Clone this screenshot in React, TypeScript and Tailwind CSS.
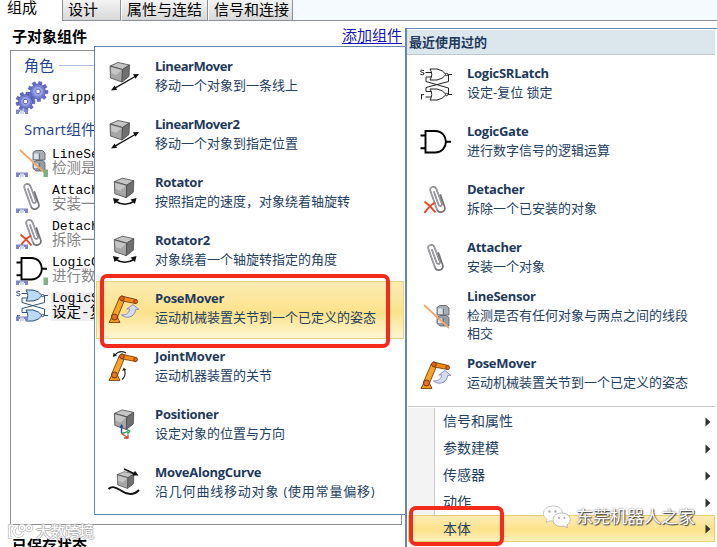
import type { ReactNode } from "react"
import { clsx } from "clsx"

type IconName =
  | "linear"
  | "rotator"
  | "pose"
  | "joint"
  | "positioner"
  | "curve"
  | "latch"
  | "gate"
  | "detach"
  | "attach"
  | "sensor"
  | "gears"

interface MenuEntry {
  title: string
  desc: string
  icon: IconName
  titleClass?: string
  descClass?: string
  active?: boolean
}

const bodyMenu: MenuEntry[] = [
  { title: "LinearMover", desc: "移动一个对象到一条线上", icon: "linear", titleClass: "tracking-[-0.47px]" },
  { title: "LinearMover2", desc: "移动一个对象到指定位置", icon: "linear", titleClass: "tracking-[-0.47px]" },
  { title: "Rotator", desc: "按照指定的速度，对象绕着轴旋转", icon: "rotator" },
  { title: "Rotator2", desc: "对象绕着一个轴旋转指定的角度", icon: "rotator" },
  { title: "PoseMover", desc: "运动机械装置关节到一个已定义的姿态", icon: "pose", active: true },
  { title: "JointMover", desc: "运动机器装置的关节", icon: "joint", titleClass: "tracking-[-0.15px]" },
  { title: "Positioner", desc: "设定对象的位置与方向", icon: "positioner" },
  {
    title: "MoveAlongCurve",
    desc: "沿几何曲线移动对象 (使用常量偏移)",
    icon: "curve",
    descClass: "tracking-[0.8px]",
  },
]

const recentMenu: MenuEntry[] = [
  { title: "LogicSRLatch", desc: "设定-复位 锁定", icon: "latch" },
  { title: "LogicGate", desc: "进行数字信号的逻辑运算", icon: "gate" },
  { title: "Detacher", desc: "拆除一个已安装的对象", icon: "detach" },
  { title: "Attacher", desc: "安装一个对象", icon: "attach" },
  { title: "LineSensor", desc: "检测是否有任何对象与两点之间的线段相交", icon: "sensor" },
  { title: "PoseMover", desc: "运动机械装置关节到一个已定义的姿态", icon: "pose" },
]

const components = [
  { name: "LineSensor", desc: "检测是否有任何对象", icon: "sensor" as IconName, out: true },
  { name: "Attacher", desc: "安装一个对象", icon: "attach" as IconName },
  { name: "Detacher", desc: "拆除一个已安装", icon: "detach" as IconName },
  { name: "LogicGate", desc: "进行数字信号", icon: "gate" as IconName, out: true },
  { name: "LogicSRLatch", desc: "设定-复位 锁定", icon: "latch" as IconName, selected: true },
]

const categories = ["信号和属性", "参数建模", "传感器", "动作", "本体"]

function Cube({ transform }: { transform?: string }) {
  return (
    <g transform={transform} stroke="#4a4a4a" strokeWidth="0.8" strokeLinejoin="round">
      <path d="M2 6 L10 2.5 L21.5 5 L14.5 9.5 Z" fill="#c4c4c4" />
      <path d="M2 6 L14.5 9.5 L14 22 L2.5 18 Z" fill="#a6a6a6" />
      <path d="M14.5 9.5 L21.5 5 L21 16.5 L14 22 Z" fill="#707070" />
      <path d="M3 7.2 L13.6 10.2 L8 15 L3.3 13 Z" fill="#d4d4d4" stroke="none" opacity="0.7" />
    </g>
  )
}

function Arm() {
  return (
    <g strokeLinejoin="round">
      <path d="M1 30.5 L4 24.5 H9 L12 30.5 Z" fill="#f39a1e" stroke="#7a3d0c" strokeWidth="0.9" />
      <path d="M3.6 24 L11.3 6 L16.6 8 L9.5 25 Z" fill="#f7a526" stroke="#7a3d0c" strokeWidth="0.9" />
      <path d="M13.5 4 L28.5 7.6 L28 11.6 L13.5 8.8 Z" fill="#f28a1c" stroke="#7a3d0c" strokeWidth="0.9" />
      <circle cx="13.9" cy="6.3" r="2.4" fill="#e0641a" stroke="#6b2a0c" strokeWidth="0.8" />
      <circle cx="6.5" cy="25" r="3" fill="#e8731c" stroke="#6b2a0c" strokeWidth="0.9" />
      <circle cx="27.7" cy="9.6" r="2" fill="#e0641a" stroke="#6b2a0c" strokeWidth="0.6" />
    </g>
  )
}

function Clip({ transform }: { transform?: string }) {
  return (
    <g transform={transform} fill="none" strokeLinecap="round">
      <path
        d="M12 8 L16.5 20.5 C17.4 23 20.6 22 19.8 19.5 L14.5 5.2 C13 1.2 7 2.8 8.4 7 L15 25.5 C16.8 30.3 24.4 28 22.7 23 L18.5 11"
        stroke="#77757b"
        strokeWidth="1.7"
      />
      <path
        d="M12 8 L16.5 20.5 C17.4 23 20.6 22 19.8 19.5 L14.5 5.2 C13 1.2 7 2.8 8.4 7 L15 25.5"
        stroke="#d6d4da"
        strokeWidth="0.5"
      />
    </g>
  )
}

function Gear({ x, y, r }: { x: number; y: number; r: number }) {
  return (
    <g transform={`translate(${x} ${y}) rotate(14)`}>
      {[0, 40, 80, 120, 160, 200, 240, 280, 320].map((a) => (
        <rect
          key={a}
          x="-1.6"
          y={-r}
          width="3.2"
          height="5"
          fill="#656dc4"
          stroke="#3a3f96"
          strokeWidth="0.4"
          transform={`rotate(${a})`}
        />
      ))}
      <circle r={r - 2.5} fill="#747dd0" stroke="#4a50a8" strokeWidth="0.5" />
      <circle r={r - 5} fill="#98a5ea" />
      <circle r="2.3" fill="#fff" stroke="#4a50a8" strokeWidth="0.8" />
    </g>
  )
}

function Latch({ tint = "none", stroke = "#222" }: { tint?: string; stroke?: string }) {
  return (
    <g fill="none" stroke={stroke} strokeWidth="1">
      <path d="M10 1 H17 Q23 2 26 6.5 Q23 11 17 12 H10 Q13.5 6.5 10 1 Z" fill={tint} />
      <path d="M10 21 H17 Q23 22 26 26.5 Q23 31 17 32 H10 Q13.5 26.5 10 21 Z" fill={tint} />
      <circle cx="26.7" cy="6.5" r="1.2" fill="#fff" />
      <circle cx="26.7" cy="26.5" r="1.2" fill="#fff" />
      <path d="M5.5 4.5 H11 M5.5 29 H11 M28 6.5 H32 M28 26.5 H32" />
      <path d="M11.5 9 H6 V13.5 L28.5 20 V26.5 M11.5 23.5 H6 V19.5 L28.5 13.5 V6.5" />
      <path d="M4 2.6 Q0.5 1.2 0.6 3.2 Q0.8 4.3 2.4 4.4 Q4.4 4.6 4 6 Q3 7.5 0.3 6.2 M1.5 26 V31.5 M1.5 28 Q2.2 26 4 26.4" />
    </g>
  )
}

const drawings: Record<IconName, ReactNode> = {
  linear: (
    <>
      <Cube />
      <path d="M6 28.6 L28 16" stroke="#111" strokeWidth="1.3" />
      <path d="M3 30.5 L6.5 25.5 L9.2 29.8 Z M31 14 L27.5 18.8 L25 14.3 Z" fill="#111" />
    </>
  ),
  rotator: (
    <>
      <Cube transform="translate(4.3 -0.3)" />
      <path d="M8 25.5 Q16.5 31 26 25.5" fill="none" stroke="#111" strokeWidth="1.5" />
      <path d="M5 22 L11.5 23.5 L6.5 28 Z M28.5 22 L22.5 23.5 L27 28 Z" fill="#111" />
    </>
  ),
  pose: (
    <>
      <Arm />
      <path
        d="M13.5 23 Q18.5 23.5 20.8 20 Q21.8 18 21.3 16.8 L18.8 17 L25 12.5 L31 17.5 L27.8 17.3 Q27.5 21.5 24 24 Q18.5 27 13.5 23 Z"
        fill="#d3dbf5"
        stroke="#7780b4"
        strokeWidth="0.8"
      />
    </>
  ),
  joint: (
    <>
      <Arm />
      <path d="M7 5 Q11.5 -0.5 18 3 M14 29.5 Q18.5 26 16.5 20" fill="none" stroke="#222" strokeWidth="1.1" />
      <path d="M4.8 7 L5.6 2.8 L9 5.4 Z M14 20.8 L15.8 17.8 L18.5 20 Z" fill="#222" />
    </>
  ),
  positioner: (
    <>
      <Cube transform="translate(4.3 -0.6)" />
      <path d="M13.5 25 V18" stroke="#24449a" strokeWidth="1.4" />
      <path d="M11.5 19.5 L13.5 16 L15.5 19.5 Z" fill="#24449a" />
      <path d="M13.5 25.5 L20 23.7 M18.5 21.2 L21.8 23.2 L19.5 26" fill="none" stroke="#2c9c58" strokeWidth="1.3" />
      <path d="M13.5 25.5 L19.5 29.5 M20 26.5 V30 H16" fill="none" stroke="#c8452d" strokeWidth="1.3" />
    </>
  ),
  curve: (
    <>
      <Cube transform="translate(7.5 3.5) scale(0.86)" />
      <path d="M16 3 L27 8" stroke="#111" strokeWidth="1.6" />
      <path d="M30.5 9.5 L24.5 9.5 L27 4.8 Z" fill="#111" />
      <path d="M0.5 23 C4 19.5 8 21.5 13 24.5 C19 29 26 29.5 31 24" fill="none" stroke="#111" strokeWidth="1.9" />
    </>
  ),
  latch: <Latch />,
  gate: (
    <path
      d="M5.5 5 H15 C29.5 5 29.5 26.5 15 26.5 H5.5 Z M0.5 9.5 H5.5 M0.5 22.3 H5.5 M26 15.8 H31"
      fill="#fff"
      stroke="#000"
      strokeWidth="1.9"
    />
  ),
  detach: (
    <>
      <Clip transform="translate(2 0)" />
      <path d="M4.5 17.5 Q10 21.5 15.5 28.5 M15 18.5 Q9 22 4.5 29" fill="none" stroke="#e8472b" strokeWidth="2" />
    </>
  ),
  attach: <Clip />,
  sensor: (
    <>
      <path d="M17 7.5 L20 5.5 H26.5 L29 8 V15 H17 Z" fill="#a6adb3" stroke="#565c62" strokeWidth="0.8" />
      <path d="M17 17.5 L20 15.5 H26.5 L29 17.5 V26 H20 L17 23.5 Z" fill="#969da4" stroke="#565c62" strokeWidth="0.8" />
      <path d="M18 8.5 H22.5 V14 H18 Z M18 18.5 H22 V23 H18 Z" fill="#dce3e8" />
      <path d="M23.5 8.5 V14.5 M23.5 18 V25.5" stroke="#60666c" strokeWidth="0.8" />
      <path d="M4 5 L29 28" stroke="#f2a56b" strokeWidth="1.7" />
    </>
  ),
  gears: (
    <>
      <Gear x={9.5} y={19.5} r={9.5} />
      <Gear x={22} y={9.5} r={10} />
    </>
  ),
}

function Icon({ name }: { name: IconName }) {
  return (
    <svg viewBox="0 0 32 32" className="size-8 shrink-0 overflow-visible">
      {drawings[name]}
    </svg>
  )
}

// Same drawing with the small port marks in its corners
function ListIcon({ name, out }: { name: IconName; out?: boolean }) {
  return (
    <svg viewBox="0 0 32 32" className="size-8 shrink-0 overflow-visible">
      {name === "latch" ? <Latch tint="#bcd9f6" stroke="#2f5578" /> : drawings[name]}
      <path d="M0 27.5 H12 V32 H9 V30 H3 V32 H0 Z" fill="#7f86c4" />
      <path d="M4 28.5 H8 V32 H4 Z" fill="#d3d8f2" />
      {out && <path d="M27.5 24.5 H32 V32 H27.5 Z" fill="#7fb189" />}
    </svg>
  )
}

function MenuItem({ entry, className, textClass }: { entry: MenuEntry; className: string; textClass: string }) {
  return (
    <div
      className={clsx(
        "flex h-[58px] items-center border",
        entry.active
          ? "border-[#e8d27c] bg-linear-to-b from-[#fdecb4] via-[#fce289] via-55% to-[#fef6d2]"
          : "border-transparent",
        className
      )}
    >
      <Icon name={entry.icon} />
      <div className={clsx("ml-[15px] text-[13px] text-[#24405f]", textClass)}>
        <div
          className={clsx(
            "h-[18px] leading-[18px] font-bold text-[#1e395b]",
            entry.titleClass ?? "tracking-[-0.28px]"
          )}
        >
          {entry.title}
        </div>
        <div className={clsx("mt-px leading-[18px]", entry.descClass)}>{entry.desc}</div>
      </div>
    </div>
  )
}

function Tab({ children, className }: { children: ReactNode; className: string }) {
  return (
    <div
      className={clsx(
        "h-[21px] border-r border-b border-[#8b9097] bg-linear-to-b from-[#f4f4f4] to-[#d8d8d8] pl-[5px] leading-[23px]",
        className
      )}
    >
      {children}
    </div>
  )
}

export default function App() {
  return (
    <div className="relative h-[547px] w-[717px] overflow-hidden bg-white font-['Open_Sans','Noto_Sans_CJK_SC',sans-serif] text-black">
      <div className="flex h-[21px] font-['Liberation_Mono','Noto_Sans_CJK_SC',monospace] text-[15px] whitespace-nowrap">
        <div className="w-[62px] pl-[7px] leading-[19px]">组成</div>
        <Tab className="w-[59px] border-l">设计</Tab>
        <Tab className="w-[87px] border-l border-l-white">属性与连结</Tab>
        <Tab className="w-[85px] border-l border-l-white">信号和连接</Tab>
        <div className="flex-1 border-b border-[#8b9097] bg-[#f4faff]" />
      </div>

      <div className="flex h-[29px] w-[402px] items-center justify-between pl-[12px] text-[15px] leading-[19px]">
        <span className="mt-[2px] font-bold">子对象组件</span>
        <span className="border-b border-[#1414b8] leading-[16px] text-[#1414b8]">添加组件</span>
      </div>

      <div className="ml-[10px] h-[475px] w-[392px] overflow-hidden border border-[#8b8f93] pl-[5px] whitespace-nowrap">
        <div className="flex h-[28px] items-center pl-[8px] text-[15px] text-[#1f4390]">
          角色
          <span className="ml-[5px] h-px flex-1 bg-[#a9bedb]" />
        </div>
        <div className="flex h-[36px] items-center pt-px font-['Liberation_Mono',monospace] text-[13px]">
          <ListIcon name="gears" />
          <span className="mt-px ml-[4px]">gripper</span>
        </div>
        <div className="flex h-[28px] items-center pl-[8px] text-[15px] text-[#1f4390]">Smart组件</div>
        {components.map((c) => (
          <div key={c.name} className="flex h-9 items-center">
            <ListIcon name={c.icon} out={c.out} />
            <div className={clsx("mt-[3px] ml-[3px] pl-px", c.selected && "bg-[#efefef]")}>
              <div className="h-[14px] font-['Liberation_Mono',monospace] text-[13px] leading-[14px]">{c.name}</div>
              <div
                className={clsx(
                  "h-[15px] font-['Liberation_Mono','Noto_Sans_CJK_SC',monospace] text-[14.5px] leading-[14px]",
                  c.selected ? "text-black" : "text-[#858585]"
                )}
              >
                {c.desc}
              </div>
            </div>
          </div>
        ))}
      </div>
      <div className="mt-[9px] pl-[12px] text-[15px] leading-[22px] font-bold">已保存状态</div>

      {/* submenu */}
      <div className="absolute top-[46px] left-[94px] h-[469px] w-[312px] border border-[#6586ad] bg-white pt-[2px] pl-px">
        {bodyMenu.map((m) => (
          <MenuItem key={m.title} entry={m} className="w-[308px] pb-[4px] pl-[11px]" textClass="-mt-[2px]" />
        ))}
      </div>

      {/* main menu */}
      <div className="absolute top-[28px] left-[405px] h-[519px] w-[312px] border-t border-l-2 border-[#6586ad] bg-white pt-px">
        <div className="h-[25px] w-[308px] border-b border-[#bfc6cc] bg-[#dce6ed] pl-[2px] text-[13px] leading-[24px] font-bold text-[#1e395b]">
          最近使用过的
        </div>
        {recentMenu.map((m) => (
          <MenuItem key={m.title} entry={m} className="w-[304px] pr-[10px] pl-[12px]" textClass="-mt-[4px]" />
        ))}
        <div className="mt-[3px] ml-px h-px w-[307px] bg-[#c6c6c6]" />
        <div className="mt-px ml-px w-[307px] bg-linear-to-r from-[#f3f3f3] from-[26px] to-white to-[26px]">
          {categories.map((c) => (
            <div
              key={c}
              className={clsx(
                "flex h-[27px] items-center justify-between border pr-[3px] text-[14px] text-[#24405f]",
                c === "本体"
                  ? "-mt-px border-[#e8cf70] bg-linear-to-b from-[#fdecb4] via-[#fce289] via-55% to-[#fdf0bc] pl-[34px]"
                  : "border-transparent"
              )}
            >
              {c === "本体" ? (
                c
              ) : (
                <span className="ml-[25px] h-[27px] border-l border-[#c9c9c9] pl-[8px] leading-[26px]">{c}</span>
              )}
              <svg viewBox="0 0 6 10" className="h-[10px] w-[6px]">
                <path d="M0.5 0.5 L5.5 5 L0.5 9.5 Z" fill="#333" />
              </svg>
            </div>
          ))}
        </div>
      </div>

      {/* highlight frames */}
      <div className="absolute top-[274px] left-[100px] h-[74px] w-[290px] rounded-[7px] border-[4.5px] border-[#f32a1c]" />
      <div className="absolute top-[506px] left-[409px] h-[40px] w-[95px] rounded-[7px] border-[4px] border-[#f32a1c]" />

      {/* watermarks */}
      <div className="absolute top-[504px] left-[543px] flex items-center text-[17px] leading-[26px] whitespace-nowrap text-white [text-shadow:1px_1px_1px_#444,0_0_2px_#666]">
        <svg viewBox="0 0 28 24" className="h-6 w-7">
          <path
            d="M10 1 C4 1 0.5 4.5 0.5 8.5 C0.5 11 2 13 4 14.3 L3 17.5 L7 15.7 C13 17.5 19.5 13.5 19.5 8.5 C19.5 4.5 16 1 10 1 Z"
            fill="#fff"
            stroke="#bbb"
            strokeWidth="0.8"
          />
          <path
            d="M18.5 8 C13.5 8 10 11 10 14.8 C10 19.5 15 22.5 21 21 L24.5 22.8 L23.8 20 C26 18.5 27.3 16.7 27.3 14.7 C27.3 11 23.5 8 18.5 8 Z"
            fill="#fff"
            stroke="#aaa"
            strokeWidth="0.8"
          />
          <g fill="#aaa">
            <circle cx="6.5" cy="6.5" r="1.2" />
            <circle cx="12.5" cy="6.5" r="1.2" />
            <circle cx="16" cy="13" r="1" />
            <circle cx="21.5" cy="13" r="1" />
          </g>
        </svg>
        <span className="ml-[5px]">东莞机器人之家</span>
      </div>
      <div className="absolute top-[522px] left-[7px] flex items-center text-[14.5px] leading-[20px] whitespace-nowrap text-white [text-shadow:1px_0_0_#bbb,-1px_0_0_#bbb,0_1px_0_#bbb,0_-1px_0_#bbb]">
        <svg viewBox="0 0 27 18" className="h-[18px] w-[27px]" fill="none">
          <g stroke="#bbb" strokeWidth="3.2">
            <path d="M6 2.5 H2.5 V14.5 H5 M9 4 C4.5 9 9 15.5 14 12.5 L16 10" />
            <circle cx="15" cy="5" r="2.7" />
            <circle cx="22" cy="5" r="2.7" />
          </g>
          <g stroke="#fff" strokeWidth="1.7">
            <path d="M6 2.5 H2.5 V14.5 H5 M9 4 C4.5 9 9 15.5 14 12.5 L16 10" />
            <circle cx="15" cy="5" r="2.7" />
            <circle cx="22" cy="5" r="2.7" />
          </g>
        </svg>
        <span className="ml-[2px]">大数跨境</span>
      </div>
    </div>
  )
}
